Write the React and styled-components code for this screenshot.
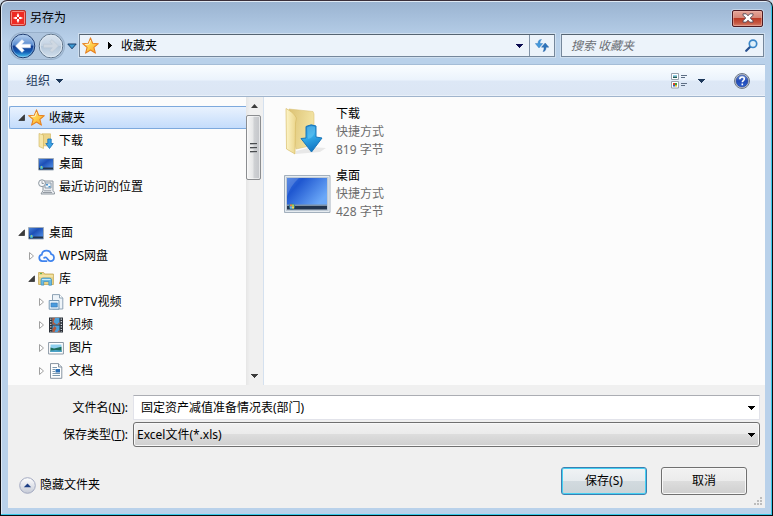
import React from "react";
import styled, { createGlobalStyle } from "styled-components";

const GlobalStyle = createGlobalStyle`
  *, *::before, *::after { box-sizing: border-box; }
  body { margin: 0; background: #cfdbe8; }
  body, button, input, select {
    font-family: "Noto Sans", "Noto Sans CJK SC", sans-serif;
    font-size: 12px;
    color: #000;
  }
  button { padding: 0; border: 0; background: none; }
  svg { display: block; flex: none; }
`;

const Frame = styled.div`
  min-height: 100vh;
  display: flex;
  flex-direction: column;
  border: 1px solid #0c0c10;
  border-top-color: #3a2f3a;
  border-radius: 7px 7px 0 0;
  padding: 0 7px 7px;
  background: linear-gradient(#9ab3d0 0, #a6bfdb 16px, #b9d1ea 40px, #b9d1ea);
  box-shadow: inset -1px -1px 0 #38c8e8, inset 1px 1px 0 #dfe9f4;
`;

const TitleBar = styled.header`
  height: 32px;
  display: flex;
  align-items: center;
  gap: 4px;
  padding: 2px 2px 0;
`;

const Title = styled.h1`
  flex: 1;
  margin: 0;
  font-size: 12px;
  font-weight: 400;
  line-height: 16px;
`;

const CloseButton = styled.button`
  width: 31px;
  height: 17px;
  display: grid;
  place-items: center;
  border: 1px solid #4f1a22;
  border-radius: 2px;
  background: linear-gradient(#e6a699, #d58677 46%, #bb3a25 50%, #c65842 80%, #d5826f);
  box-shadow: inset 0 0 0 1px #ecb9ae88, 0 0 0 1px #c3d4e7;
`;

const NavBar = styled.nav`
  height: 31px;
  display: flex;
  align-items: flex-start;
  padding: 0 1px 0 2px;
`;

const History = styled.div`
  display: flex;
  align-items: center;
  height: 26px;
`;

const HistoryPill = styled.div`
  display: flex;
  align-items: center;
  gap: 2px;
  height: 26px;
  border-radius: 13px;
  background: #aec5de;
  box-shadow: 0 0 0 1px #98b0ca;
`;

const RoundButton = styled.button`
  width: 26px;
  height: 26px;
`;

const MenuArrow = styled.button`
  width: 15px;
  height: 24px;
  display: grid;
  place-items: center;
`;

const AddressBar = styled.div`
  flex: 1;
  height: 23px;
  margin-top: 1px;
  display: flex;
  border: 1px solid #75879b;
  border-top-color: #556472;
  background: #ecf3fa;
  box-shadow: 0 0 0 1px #cfdfef;
`;

const Crumbs = styled.div`
  flex: 1;
  display: flex;
  align-items: center;
  padding-left: 2px;
`;

const Crumb = styled.button`
  line-height: 18px;
  margin-left: 9px;
`;

const CrumbArrow = styled.button`
  margin-left: 9px;
`;

const BarButton = styled.button`
  width: ${(p) => p.$width}px;
  display: grid;
  place-items: center;
  border-left: ${(p) => (p.$divided ? "1px solid #8294a8" : "0")};
`;

const SearchBox = styled.label`
  flex: 0 1 202px;
  height: 23px;
  margin: 1px 0 0 6px;
  display: flex;
  align-items: center;
  padding: 0 5px 0 9px;
  border: 1px solid #75879b;
  border-top-color: #556472;
  background: #ecf3fa;
  box-shadow: 0 0 0 1px #cfdfef;
`;

const SearchInput = styled.input`
  flex: 1;
  min-width: 0;
  padding: 0;
  border: 0;
  outline: 0;
  background: none;
  &::placeholder { color: #6b6f75; font-style: italic; opacity: 1; }
`;

const Client = styled.main`
  flex: 1;
  display: flex;
  flex-direction: column;
  background: #f0f0f0;
`;

const Toolbar = styled.div`
  height: 33px;
  display: flex;
  align-items: center;
  padding: 0 15px 0 18px;
  border-top: 1px solid #a5bdd7;
  border-bottom: 1px solid #a0b4cc;
  background: linear-gradient(#fafdff 0, #ebf3fc 15px, #dde8f6 16px, #dce6f4 100%);
  box-shadow: inset 0 -1px 0 #e9f0f9;
`;

const ToolButton = styled.button`
  display: flex;
  align-items: center;
  gap: ${(p) => p.$gap || 5}px;
  line-height: 18px;
  color: #1e395b;
`;

const Spacer = styled.div`
  flex: 1;
`;

const HelpButton = styled.button`
  margin-left: 29px;
`;

const Browser = styled.div`
  flex: 1;
  display: grid;
  grid-template-columns: 256px 1fr;
  background: #fcfcfc;
`;

const Sidebar = styled.aside`
  display: flex;
  border-right: 1px solid #d5e1ef;
`;

const Tree = styled.ul`
  flex: 1;
  min-width: 0;
  margin: 0;
  padding: 9px 0 0 1px;
  list-style: none;
`;

const TreeRow = styled.li`
  height: 23px;
  display: flex;
  align-items: center;
  line-height: 18px;
  margin-top: ${(p) => (p.$gapBefore ? 23 : 0)}px;
  padding-left: ${(p) => 8 + p.$level * 10}px;
  border: 1px solid ${(p) => (p.$selected ? "#7da9dd" : "transparent")};
  border-right: 0;
  border-radius: 2px 0 0 2px;
  background: ${(p) => (p.$selected ? "linear-gradient(#e9f2fe, #c4dcfb)" : "none")};
`;

const Twist = styled.span`
  width: 10px;
  flex: none;
`;

const IconSlot = styled.span`
  width: 17px;
  flex: none;
`;

const TreeLabel = styled.span`
  margin-left: 4px;
`;

const ScrollTrack = styled.div`
  width: 17px;
  display: flex;
  flex-direction: column;
  align-items: flex-start;
  background: linear-gradient(90deg, #e6e6e6, #f0f0f0 4px);
`;

const ScrollArrow = styled.button`
  width: 16px;
  height: 18px;
  display: grid;
  place-items: center;
`;

const Thumb = styled.div`
  width: 15px;
  height: 65px;
  display: flex;
  flex-direction: column;
  align-items: center;
  justify-content: center;
  gap: 2px;
  border: 1px solid #8b8d90;
  border-radius: 2px;
  background: linear-gradient(90deg, #f6f6f6, #e6e7e8 45%, #cfd1d4 55%, #c3c5c9);
  box-shadow: inset 0 0 0 1px #fbfbfb99;
`;

const GripLine = styled.span`
  width: 7px;
  height: 2px;
  border-top: 1px solid #4a4d50;
  border-bottom: 1px solid #b5b7ba;
`;

const FileList = styled.div`
  display: flex;
  flex-direction: column;
  gap: 8px;
  padding: 8px 20px;
`;

const FileItem = styled.div`
  display: flex;
  align-items: center;
  gap: 4px;
  height: 54px;
`;

const FileText = styled.div`
  display: grid;
  line-height: 18px;
`;

const FileMeta = styled.span`
  color: #6d6d6d;
`;

const Footer = styled.form`
  padding: 10px 1px 1px 8px;
`;

const Fields = styled.div`
  display: grid;
  grid-template-columns: 112px 1fr;
  column-gap: 5px;
  row-gap: 2px;
  padding-right: 4px;
`;

const FieldLabel = styled.label`
  line-height: 25px;
  text-align: right;
`;

const ComboBox = styled.div`
  height: 25px;
  display: flex;
  border: 1px solid #e2e3ea;
  border-top-color: #abadb3;
  background: #fff;
`;

const NameInput = styled.input`
  flex: 1;
  min-width: 0;
  padding: 0 7px 2px;
  border: 0;
  outline: 0;
  background: none;
`;

const ComboArrow = styled.button`
  width: 16px;
  display: grid;
  place-items: center;
`;

const SelectWrap = styled.div`
  height: 25px;
  display: flex;
  align-items: center;
  padding-right: 4px;
  border: 1px solid #707070;
  border-radius: 3px;
  background: linear-gradient(#f2f2f2, #ebebeb 49%, #dddddd 50%, #cfcfcf);
  box-shadow: inset 0 0 0 1px #f8f8f8;
`;

const TypeSelect = styled.select`
  flex: 1;
  height: 23px;
  padding: 0 3px;
  border: 0;
  outline: 0;
  appearance: none;
  background: none;
`;

const Actions = styled.div`
  display: flex;
  align-items: flex-start;
  padding: 20px 17px 0 3px;
`;

const HideFolders = styled.button`
  display: flex;
  align-items: center;
  gap: 4px;
  margin-top: 9px;
  line-height: 18px;
`;

const PushButton = styled.button`
  width: 86px;
  height: 28px;
  margin-left: ${(p) => (p.$primary ? 0 : 14)}px;
  border: 1px solid ${(p) => (p.$primary ? "#3c7fb1" : "#707070")};
  border-radius: 3px;
  padding-bottom: 2px;
  background: ${(p) =>
    p.$primary
      ? "linear-gradient(#f0f3f5, #e6ebee 49%, #d2dadf 50%, #cbd4d8)"
      : "linear-gradient(#f2f2f2, #ebebeb 49%, #dddddd 50%, #cfcfcf)"};
  box-shadow: inset 0 0 0 1px ${(p) => (p.$primary ? "#45d0f3" : "#f8f8f8")};
`;

const GripCorner = styled.div`
  display: flex;
  justify-content: flex-end;
  padding: 2px 2px 1px 0;
`;

const Down = ({ color = "#000", w = 7 }) => (
  <svg width={w} height="4" viewBox="0 0 7 4" preserveAspectRatio="none" shapeRendering="crispEdges">
    <path d="M0 0h7L3.5 4z" fill={color} />
  </svg>
);

const AppIcon = () => (
  <svg width="16" height="16" viewBox="0 0 16 16">
    <rect x=".5" y=".5" width="15" height="15" rx="1.5" fill="#ee2a22" stroke="#b3322c" />
    <rect x="1.5" y="1.5" width="13" height="13" rx="1" fill="none" stroke="#f58c83" />
    <path d="M8 2.800 9.600 6.400 13.200 8 9.600 9.600 8 13.200 6.400 9.600 2.800 8 6.400 6.400z" fill="#fff" />
    <path d="M6 6l4 4M10 6l-4 4" stroke="#ee2a22" strokeWidth="1" />
  </svg>
);

const CloseIcon = () => (
  <svg width="12" height="10" viewBox="0 0 12 10">
    <path d="M1 .8h3.200L6 2.800 7.800 .8H11v1.400L8.300 5 11 7.800v1.400H7.800L6 7.200 4.200 9.200H1V7.800L3.700 5 1 2.200z" fill="#fff" stroke="#50434f" strokeWidth=".9" />
  </svg>
);

const BackIcon = () => (
  <svg width="26" height="26" viewBox="0 0 26 26">
    <defs>
      <linearGradient id="backTop" x2="0" y2="1">
        <stop offset="0" stopColor="#b9d2f0" />
        <stop offset=".44" stopColor="#5c8ed0" />
        <stop offset=".52" stopColor="#153f92" />
        <stop offset=".75" stopColor="#135bb4" />
        <stop offset="1" stopColor="#4fd3f8" />
      </linearGradient>
    </defs>
    <circle cx="13" cy="13" r="11.800" fill="url(#backTop)" stroke="#1e3b6e" />
    <circle cx="13" cy="13" r="10.800" fill="none" stroke="#a5c8ee" strokeOpacity=".6" />
    <path d="M5.500 13 12 6.500l2.200 2.200-2.500 2.500H20.500v3.600h-8.800l2.500 2.500-2.200 2.200z" fill="#fff" stroke="#dbe7f5" strokeWidth=".5" />
  </svg>
);

const ForwardIcon = () => (
  <svg width="26" height="26" viewBox="0 0 26 26">
    <defs>
      <linearGradient id="fwd" x2="0" y2="1">
        <stop offset="0" stopColor="#dae5f0" />
        <stop offset=".5" stopColor="#c3d2e2" />
        <stop offset=".52" stopColor="#b3c6d9" />
        <stop offset="1" stopColor="#d3e0ed" />
      </linearGradient>
    </defs>
    <circle cx="13" cy="13" r="11.800" fill="url(#fwd)" stroke="#5f7489" />
    <circle cx="13" cy="13" r="10.800" fill="none" stroke="#dfe9f3" />
    <path d="M20.500 13 14 6.500l-2.200 2.200 2.500 2.500H5.500v3.600h8.800l-2.500 2.500 2.200 2.200z" fill="#cfd8e2" stroke="#b9c6d4" strokeWidth=".6" />
  </svg>
);

const HistoryArrow = () => (
  <svg width="10" height="7" viewBox="0 0 10 7">
    <path d="M.8 1h8.400L5 5.800z" fill="#3d9bd4" stroke="#173d6b" />
  </svg>
);

const Star = () => (
  <svg width="17" height="17" viewBox="0 0 16 16">
    <defs>
      <linearGradient id="star" x2="1" y2="1">
        <stop offset="0" stopColor="#ffe89a" />
        <stop offset=".5" stopColor="#ffd04c" />
        <stop offset="1" stopColor="#f79a20" />
      </linearGradient>
    </defs>
    <path d="M8 .8 10 5.900l5.400.4-4.200 3.500 1.400 5.400L8 12.200l-4.600 3 1.400-5.400L.6 6.300 6 5.900z" fill="url(#star)" stroke="#e58022" strokeLinejoin="round" />
    <path d="M8 3 6.700 6.800 3 7" fill="none" stroke="#fff5cf" strokeWidth=".9" />
  </svg>
);

const CrumbTriangle = () => (
  <svg width="4" height="7" viewBox="0 0 4 7" shapeRendering="crispEdges">
    <path d="M0 0l4 3.500L0 7z" fill="#000" />
  </svg>
);

const RefreshIcon = () => (
  <svg width="14" height="13" viewBox="0 0 14 13">
    <path d="M6.500 .5C4 .6 3 2 3 4.500H.3L4 9l3.700-4.500H5C5 3 5.200 2 6.500 .5z" fill="#4499dc" stroke="#2d74b9" strokeWidth=".4" />
    <path d="M8 12.500c2.300-.3 3-1.500 3-4.300h2.800L10.200 4 6.500 8.200H9c0 2-.1 3-1 4.300z" fill="#2e75bd" stroke="#235c9d" strokeWidth=".4" />
  </svg>
);

const SearchIcon = () => (
  <svg width="13" height="13" viewBox="0 0 13 13">
    <path d="M1.200 11.800 5.200 7.700" stroke="#27508f" strokeWidth="2.200" strokeLinecap="round" />
    <circle cx="8" cy="4.800" r="3.700" fill="#dff0fb" stroke="#3a86c8" strokeWidth="1.700" />
  </svg>
);

const ViewIcon = () => (
  <svg width="17" height="16" viewBox="0 0 17 16">
    <path d="M.5 .5h7v6h-7zM.5 8.500h7v6.500h-7z" fill="#fff" stroke="#98a2ae" />
    <path d="M2 2h4v1.500H2z" fill="#8ed0ea" />
    <path d="M2 3.500h4V5H2z" fill="#1c5a55" />
    <path d="M2 10h2v2H2z" fill="#d6402c" />
    <path d="M4 10h2v2H4z" fill="#3da03c" />
    <path d="M2 12h2v1.500H2z" fill="#2d5fc4" />
    <path d="M4 12h2v1.500H4z" fill="#e5b91f" />
    <path d="M10 2.500h6M10 4.500h4M10 10.500h6M10 12.500h4" stroke="#5d6e84" />
  </svg>
);

const HelpIcon = () => (
  <svg width="16" height="16" viewBox="0 0 16 16">
    <defs>
      <linearGradient id="help" x2="0" y2="1">
        <stop offset="0" stopColor="#6f97e0" />
        <stop offset=".5" stopColor="#2049b5" />
        <stop offset="1" stopColor="#2c60d2" />
      </linearGradient>
    </defs>
    <circle cx="8" cy="8" r="7.500" fill="#c9ced6" stroke="#6d7887" />
    <circle cx="8" cy="8" r="6" fill="url(#help)" stroke="#26418c" strokeWidth=".6" />
    <path d="M5.800 6.300c0-1.500 1-2.300 2.300-2.300s2.200.8 2.200 2c0 1.500-2 1.600-2 3.200M8.300 10.600v1.600" fill="none" stroke="#fff" strokeWidth="1.600" />
  </svg>
);

const OpenTwist = () => (
  <svg width="7" height="7" viewBox="0 0 7 7">
    <path d="M6.500 .8v5.700H.8z" fill="#3b3b3b" stroke="#262626" strokeWidth=".7" />
  </svg>
);

const ClosedTwist = () => (
  <svg width="7" height="10" viewBox="0 0 7 10">
    <path d="M1.500 1.500v7l4-3.500z" fill="#fff" stroke="#a0a0a0" />
  </svg>
);

const DownloadFolder = () => (
  <svg width="16" height="16" viewBox="0 0 16 16">
    <path d="M4 .8h8.500v12H4z" fill="#ecd58b" stroke="#cfb15a" strokeWidth=".6" />
    <path d="M1 .5 5.500 2v13.500L1 13.500z" fill="#f6e6a8" stroke="#cfb15a" strokeWidth=".6" />
    <path d="M9.800 6h3.400v4.500h2L11.500 15.500 7.800 10.500h2z" fill="#3ba3e6" stroke="#176fb5" strokeWidth=".8" />
  </svg>
);

const DesktopSmall = () => (
  <svg width="16" height="16" viewBox="0 0 16 16">
    <defs>
      <linearGradient id="deskS" x2="1" y2="1">
        <stop offset="0" stopColor="#4b86dc" />
        <stop offset=".4" stopColor="#1d4fb6" />
        <stop offset="1" stopColor="#5b9cee" />
      </linearGradient>
    </defs>
    <path d="M.5 2.500h15v11.500H.5z" fill="url(#deskS)" stroke="#9fabb8" />
    <path d="M1 11.500h14v2H1z" fill="#22344c" />
    <circle cx="3.500" cy="11.500" r="1.700" fill="#41b1cf" />
    <path d="M3 10.500h1v1H3z" fill="#f6cf3a" />
  </svg>
);

const RecentIcon = () => (
  <svg width="17" height="16" viewBox="0 0 17 16">
    <path d="M5 2h10v9.500l1.500 2v1.500H3l2-3.500z" fill="#e8ebef" stroke="#8e979f" />
    <path d="M7 4h6v5H7z" fill="#eef6fc" stroke="#8b9aa8" />
    <path d="M8 5h2v1.500H8zM10.500 7h2v1.500h-2z" fill="#4b93cd" />
    <circle cx="4" cy="4.200" r="3.400" fill="#f6f8fa" stroke="#8c969f" />
    <path d="M4 2.200v2.300h1.800M5 13.500h9M6 11.800h7" fill="none" stroke="#7d868f" strokeWidth=".8" />
  </svg>
);

const CloudIcon = () => (
  <svg width="17" height="16" viewBox="0 0 17 16">
    <path d="M8.500 13.200H4.300a3.300 3.300 0 0 1-.5-6.500C4 4.200 6 2.600 8.500 2.600c2.400 0 4.200 1.400 4.700 3.600 1.700.3 2.800 1.700 2.800 3.400 0 2-1.500 3.600-3.500 3.600-2.300 0-2.700-2-3.700-3.200-.7-.9-2-.9-2.700-.1" fill="none" stroke="#3e83ee" strokeWidth="1.700" strokeLinecap="round" />
  </svg>
);

const LibraryIcon = () => (
  <svg width="16" height="16" viewBox="0 0 16 16">
    <path d="M.6 1.500h5l1 1.500h8.800v10.500H.6z" fill="#ebd588" stroke="#c3a551" strokeWidth=".8" />
    <path d="M1 5h14" stroke="#faf0bf" />
    <path d="M2 2.600h2" stroke="#53ad4c" />
    <path d="M3 14V9q0-2 2-2h6.500q2 0 2 2v5.200h-2.700V10.500H5.700V14.200z" fill="#69bce4" stroke="#3b8cc0" strokeWidth=".7" />
    <path d="M4 8.500h8.500" stroke="#c6e9f8" />
  </svg>
);

const PptvIcon = () => (
  <svg width="16" height="16" viewBox="0 0 16 16">
    <path d="M4.500 .6h7L14.800 4v11H4.500z" fill="#eef4f9" stroke="#8ea2b4" />
    <path d="M11.500 .6V4h3.300" fill="#fff" stroke="#8ea2b4" />
    <path d="M1.200 6.500H11v8.700H1.200z" fill="#e4f1fb" stroke="#7898b4" />
    <path d="M3 9h6.300v4H3z" fill="#4a9bdd" stroke="#3575b3" strokeWidth=".6" />
  </svg>
);

const FilmIcon = () => (
  <svg width="16" height="16" viewBox="0 0 16 16">
    <path d="M1 .5h14v15H1z" fill="#2b3038" />
    <path d="M4.500 1h7v6.500h-7zM4.500 8.500h7V15h-7z" fill="#4b9fd9" />
    <path d="M4.500 1H7L5.500 5l3 2.500h-4zM9 7.500 11.500 5v2.500zM4.500 12 6.500 9l2 2-2 4h-2zM9.500 15l2-2.500V15z" fill="#b85a3b" />
    <path d="M2.800 1.500v13.500M13.300 1.500v13.500" stroke="#dfe6ea" strokeWidth="1.200" strokeDasharray="1.200 1.400" />
  </svg>
);

const PictureIcon = () => (
  <svg width="16" height="16" viewBox="0 0 16 16">
    <path d="M.6 2.500h14.800V14H.6z" fill="#fff" stroke="#8c99a6" />
    <path d="M2.500 4.500h11v7.500h-11z" fill="#8fd0ef" />
    <path d="M2.500 7.500 6 8.500l7.500-1.700V12h-11z" fill="#1e6e5d" />
    <path d="M2.500 10.500q5-1 11 0V12h-11z" fill="#4ca3c8" />
  </svg>
);

const DocumentIcon = () => (
  <svg width="16" height="16" viewBox="0 0 16 16">
    <path d="M2.500 .6h8L13.800 4v11.300H2.500z" fill="#fff" stroke="#8793a0" />
    <path d="M10.500 .6V4h3.300" fill="#e5ebf1" stroke="#8793a0" />
    <path d="M4.500 4.500H9M4.500 6.500H7M4.500 8.500H7M4.500 10.500H12M4.500 12.500H12" stroke="#7f99ad" />
    <path d="M7.500 6h4.500v3.500H7.500z" fill="#2b70b8" />
  </svg>
);

const LargeDownloadIcon = () => (
  <svg width="48" height="50" viewBox="0 0 48 50">
    <defs>
      <linearGradient id="ldBack" x2="1" y2=".3">
        <stop offset="0" stopColor="#dcc274" />
        <stop offset="1" stopColor="#f3e4a4" />
      </linearGradient>
      <linearGradient id="ldFront" x2="1">
        <stop offset="0" stopColor="#fdf5c8" />
        <stop offset="1" stopColor="#ead388" />
      </linearGradient>
      <linearGradient id="ldArrow" x2=".3" y2="1">
        <stop offset="0" stopColor="#2383cc" />
        <stop offset=".5" stopColor="#33adeb" />
        <stop offset="1" stopColor="#1378c4" />
      </linearGradient>
    </defs>
    <path d="M12 44 28 40l14 1-6 4-24 2z" fill="#000" opacity=".08" />
    <path d="M5 2 29 4.500 30 7v31L12 42z" fill="url(#ldBack)" stroke="#dcc47b" strokeWidth=".6" />
    <path d="M2 1.500q6 3 8.500 6.500l2 3-1 5-.5 31L2.500 42z" fill="url(#ldFront)" stroke="#d9bd69" strokeWidth=".7" />
    <path d="M22 19.500q5-3 10-.5v11l6 1L27.500 45 17 31.500l5-.5z" fill="url(#ldArrow)" stroke="#1a76b9" />
    <path d="M23 20.500q4-2 8-.5v5q-2 6-7 7z" fill="#7bd0f5" opacity=".4" />
  </svg>
);

const LargeDesktopIcon = () => (
  <svg width="48" height="40" viewBox="0 0 48 40">
    <defs>
      <linearGradient id="ldk" x2="1" y2=".6">
        <stop offset="0" stopColor="#3a74de" />
        <stop offset=".3" stopColor="#1f57d0" />
        <stop offset="1" stopColor="#6ba8f8" />
      </linearGradient>
    </defs>
    <path d="M.5 1.500h45.500v37H.5z" fill="#bfcad5" stroke="#a3b0bd" />
    <path d="M1.500 2.500H45V37.500H1.500z" fill="none" stroke="#e5ebf0" />
    <path d="M3 4h40v27H3z" fill="url(#ldk)" />
    <path d="M3 4h12Q6 12 3 23z" fill="#fff" opacity=".16" />
    <path d="M3 31h40v4.500H3z" fill="#22354f" />
    <path d="M3 30.500h40V32H3z" fill="#7c91a8" />
    <circle cx="8" cy="32.500" r="3" fill="#397a94" />
    <path d="M6 30.500h2v2H6z" fill="#f08548" />
    <path d="M8 30.500h2v2H8z" fill="#a5d556" />
    <path d="M6 32.500h2v2H6z" fill="#65b8ed" />
    <path d="M8 32.500h2v2H8z" fill="#fbd44c" />
  </svg>
);

const HideIcon = () => (
  <svg width="17" height="17" viewBox="0 0 17 17">
    <defs>
      <linearGradient id="hide" x2="0" y2="1">
        <stop offset="0" stopColor="#fff" />
        <stop offset="1" stopColor="#c5cad6" />
      </linearGradient>
    </defs>
    <circle cx="8.500" cy="8.500" r="7.800" fill="url(#hide)" stroke="#a2a9c0" />
    <path d="M4.800 10.300 8.500 6.500l3.700 3.800z" fill="#1c3f85" />
  </svg>
);

const SizeGrip = () => (
  <svg width="9" height="9" viewBox="0 0 9 9" shapeRendering="crispEdges">
    <path d="M7 0h2v2H7zM4 3h2v2H4zM7 3h2v2H7zM1 6h2v2H1zM4 6h2v2H4zM7 6h2v2H7z" fill="#bdbdbd" />
  </svg>
);

const treeItems = [
  { label: "收藏夹", level: 0, twist: "open", Icon: Star, selected: true },
  { label: "下载", level: 1, Icon: DownloadFolder },
  { label: "桌面", level: 1, Icon: DesktopSmall },
  { label: "最近访问的位置", level: 1, Icon: RecentIcon },
  { label: "桌面", level: 0, twist: "open", Icon: DesktopSmall, gapBefore: true },
  { label: "WPS网盘", level: 1, twist: "closed", Icon: CloudIcon },
  { label: "库", level: 1, twist: "open", Icon: LibraryIcon },
  { label: "PPTV视频", level: 2, twist: "closed", Icon: PptvIcon },
  { label: "视频", level: 2, twist: "closed", Icon: FilmIcon },
  { label: "图片", level: 2, twist: "closed", Icon: PictureIcon },
  { label: "文档", level: 2, twist: "closed", Icon: DocumentIcon },
];

const files = [
  { name: "下载", kind: "快捷方式", size: "819 字节", Icon: LargeDownloadIcon },
  { name: "桌面", kind: "快捷方式", size: "428 字节", Icon: LargeDesktopIcon },
];

export default function App() {
  return (
    <>
      <GlobalStyle />
      <Frame>
        <TitleBar>
          <AppIcon />
          <Title>另存为</Title>
          <CloseButton aria-label="关闭"><CloseIcon /></CloseButton>
        </TitleBar>

        <NavBar>
          <History>
            <HistoryPill>
              <RoundButton aria-label="后退"><BackIcon /></RoundButton>
              <RoundButton aria-label="前进"><ForwardIcon /></RoundButton>
            </HistoryPill>
            <MenuArrow aria-label="历史记录"><HistoryArrow /></MenuArrow>
          </History>
          <AddressBar>
            <Crumbs>
              <Star />
              <CrumbArrow aria-label="展开"><CrumbTriangle /></CrumbArrow>
              <Crumb>收藏夹</Crumb>
            </Crumbs>
            <BarButton $width={20} aria-label="以前的位置"><Down color="#0b0b50" /></BarButton>
            <BarButton $width={25} $divided aria-label="刷新"><RefreshIcon /></BarButton>
          </AddressBar>
          <SearchBox>
            <SearchInput type="text" placeholder="搜索 收藏夹" aria-label="搜索 收藏夹" />
            <SearchIcon />
          </SearchBox>
        </NavBar>

        <Client>
          <Toolbar>
            <ToolButton>组织 <Down color="#1e395b" w={8} /></ToolButton>
            <Spacer />
            <ToolButton $gap={9} aria-label="更改视图"><ViewIcon /><Down color="#1e395b" w={8} /></ToolButton>
            <HelpButton aria-label="帮助"><HelpIcon /></HelpButton>
          </Toolbar>

          <Browser>
            <Sidebar>
              <Tree>
                {treeItems.map(({ label, level, twist, Icon, selected, gapBefore }, i) => (
                  <TreeRow key={i} $level={level} $selected={selected} $gapBefore={gapBefore}>
                    <Twist>
                      {twist === "open" && <OpenTwist />}
                      {twist === "closed" && <ClosedTwist />}
                    </Twist>
                    <IconSlot><Icon /></IconSlot>
                    <TreeLabel>{label}</TreeLabel>
                  </TreeRow>
                ))}
              </Tree>
              <ScrollTrack>
                <ScrollArrow aria-label="向上滚动">
                  <svg width="7" height="4" viewBox="0 0 7 4"><path d="M0 4 3.500 0 7 4z" fill="#3c3c3c" /></svg>
                </ScrollArrow>
                <Thumb><GripLine /><GripLine /><GripLine /></Thumb>
                <Spacer />
                <ScrollArrow aria-label="向下滚动"><Down color="#3c3c3c" /></ScrollArrow>
              </ScrollTrack>
            </Sidebar>
            <FileList>
              {files.map(({ name, kind, size, Icon }) => (
                <FileItem key={name}>
                  <Icon />
                  <FileText>
                    <span>{name}</span>
                    <FileMeta>{kind}</FileMeta>
                    <FileMeta>{size}</FileMeta>
                  </FileText>
                </FileItem>
              ))}
            </FileList>
          </Browser>

          <Footer onSubmit={(e) => e.preventDefault()}>
            <Fields>
              <FieldLabel htmlFor="file-name">文件名(<u>N</u>):</FieldLabel>
              <ComboBox>
                <NameInput id="file-name" type="text" defaultValue="固定资产减值准备情况表(部门)" />
                <ComboArrow type="button" aria-label="以前的文件名"><Down /></ComboArrow>
              </ComboBox>
              <FieldLabel htmlFor="file-type">保存类型(<u>T</u>):</FieldLabel>
              <SelectWrap>
                <TypeSelect id="file-type"><option>Excel文件(*.xls)</option></TypeSelect>
                <Down />
              </SelectWrap>
            </Fields>
            <Actions>
              <HideFolders type="button"><HideIcon />隐藏文件夹</HideFolders>
              <Spacer />
              <PushButton type="submit" $primary>保存(S)</PushButton>
              <PushButton type="button">取消</PushButton>
            </Actions>
            <GripCorner><SizeGrip /></GripCorner>
          </Footer>
        </Client>
      </Frame>
    </>
  );
}
